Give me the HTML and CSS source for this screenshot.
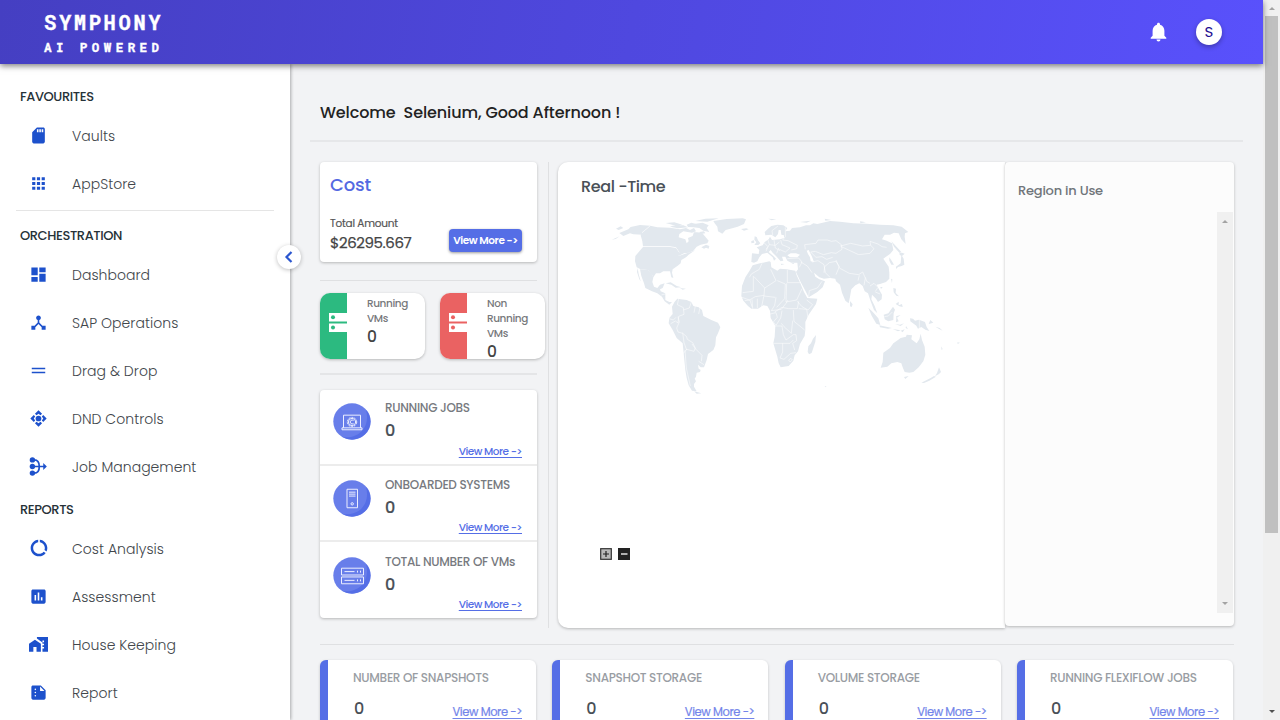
FILE: index.html
```html
<!DOCTYPE html>
<html lang="en">
<head>
<meta charset="utf-8">
<title>Symphony</title>
<link rel="stylesheet" href="styles.css">
</head>
<body>
<div class="window">
<div class="page">
  <header class="topbar">
    <div class="logo"><div class="logo-name">SYMPHONY</div><div class="logo-tag">AI POWERED</div></div>
    <div class="top-actions">
      <svg class="bell" viewBox="0 0 17 20"><path d="M8.500.7c-.9 0-1.500.6-1.500 1.500v.5C4.200 3.400 2.600 5.800 2.600 8.800v5L.7 15.800v.9h15.600v-.9l-1.900-2v-5c0-3-1.600-5.400-4.400-6.100v-.5c0-.9-.6-1.500-1.500-1.500zM6.500 17.600a2 2 0 0 0 4 0z"/></svg>
      <div class="avatar">S</div>
    </div>
  </header>
  <div class="body">
    <nav class="sidebar">
      <div class="label label-first">FAVOURITES</div>
      <a class="item"><svg viewBox="0 0 24 24"><path d="M18 2h-8L4.020 8 4 20c0 1.100.9 2 2 2h12c1.100 0 2-.9 2-2V4c0-1.100-.9-2-2-2zm-6 6h-2V4h2v4zm3 0h-2V4h2v4zm3 0h-2V4h2v4z"/></svg><span>Vaults</span></a>
      <a class="item"><svg viewBox="0 0 24 24"><path d="M4 8h4V4H4v4zm6 12h4v-4h-4v4zm-6 0h4v-4H4v4zm0-6h4v-4H4v4zm6 0h4v-4h-4v4zm6-10v4h4V4h-4zm-6 4h4V4h-4v4zm6 6h4v-4h-4v4zm0 6h4v-4h-4v4z"/></svg><span>AppStore</span></a>
      <div class="rule"></div>
      <div class="label label-second">ORCHESTRATION</div>
      <a class="item"><svg viewBox="0 0 24 24"><path d="M3 13h8V3H3v10zm0 8h8v-6H3v6zm10 0h8V11h-8v10zm0-18v6h8V3h-8z"/></svg><span>Dashboard</span></a>
      <a class="item"><svg viewBox="0 0 24 24"><path d="M17 16l-4-4V8.820C14.160 8.400 15 7.300 15 6c0-1.660-1.340-3-3-3S9 4.340 9 6c0 1.300.84 2.400 2 2.820V12l-4 4H3v5h5v-3.050l4-4.200 4 4.200V21h5v-5h-4z"/></svg><span>SAP Operations</span></a>
      <a class="item"><svg viewBox="0 0 24 24"><path d="M20.500 8.500h-17v2h17v-2zM3.500 15.500h17v-2h-17v2z"/></svg><span>Drag &amp; Drop</span></a>
      <a class="item"><svg viewBox="0 0 24 24"><circle cx="12" cy="12" r="3.600"/><path d="M7.500 6l2 1.800L12 6l2.500 1.800 2-1.800L12 1.700zM7.500 18l2-1.800L12 18l2.500-1.800 2 1.800-4.500 4.300zM6 7.500l1.800 2L6 12l1.800 2.500-1.800 2L1.700 12zM18 7.500l-1.800 2L18 12l-1.800 2.500 1.800 2 4.300-4.500z"/></svg><span>DND Controls</span></a>
      <a class="item"><svg viewBox="0 0 24 24"><path d="M4.500 3.500h2c4.500 0 6.500 4 6.500 8.500s-2 8.500-6.500 8.500h-2M4 12h15" fill="none" stroke="currentColor" stroke-width="2.200"/><circle cx="4.300" cy="3.700" r="3.400"/><circle cx="4.300" cy="12" r="3.400"/><circle cx="4.300" cy="20.300" r="3.400"/><path d="M18 7.500l4.500 4.500-4.500 4.500z"/></svg><span>Job Management</span></a>
      <div class="label label-third">REPORTS</div>
      <a class="item"><svg class="ring" viewBox="0 0 24 24"><path d="M13 2.050v3.030c3.390.49 6 3.390 6 6.920 0 .9-.18 1.750-.48 2.540l2.600 1.530c.56-1.240.88-2.620.88-4.070 0-5.180-3.950-9.450-9-9.950zM12 19c-3.870 0-7-3.130-7-7 0-3.530 2.610-6.430 6-6.920V2.050c-5.060.5-9 4.760-9 9.950 0 5.520 4.470 10 9.990 10 3.310 0 6.240-1.610 8.060-4.090l-2.600-1.530C16.170 17.980 14.210 19 12 19z"/></svg><span>Cost Analysis</span></a>
      <a class="item"><svg viewBox="0 0 24 24"><path d="M19 3H5c-1.100 0-2 .9-2 2v14c0 1.100.9 2 2 2h14c1.100 0 2-.9 2-2V5c0-1.100-.9-2-2-2zM9 17H7v-7h2v7zm4 0h-2V7h2v10zm4 0h-2v-4h2v4z"/></svg><span>Assessment</span></a>
      <a class="item"><svg viewBox="0 0 24 24"><path d="M0 11v10h5.500v-6h4v6H15V11L7.500 6zM10 2.500v1.970l7 5V11h2v2h-2v2h2v2h-2v4h7V2.500H10zm9 6.500h-2V7h2z"/></svg><span>House Keeping</span></a>
      <a class="item"><svg viewBox="0 0 24 24"><path d="M15 3H5c-1.100 0-2 .9-2 2v14c0 1.100.9 2 2 2h14c1.100 0 2-.9 2-2V9l-6-6zM8 17c-.55 0-1-.45-1-1s.45-1 1-1 1 .45 1 1-.45 1-1 1zm0-4c-.55 0-1-.45-1-1s.45-1 1-1 1 .45 1 1-.45 1-1 1zm0-4c-.55 0-1-.45-1-1s.45-1 1-1 1 .45 1 1-.45 1-1 1zm6 1V4.500l5.500 5.500H14z"/></svg><span>Report</span></a>
      <div class="collapse"><svg viewBox="0 0 10 12"><path d="M7.500 1L2.500 6l5 5" fill="none" stroke="#2b56cf" stroke-width="2.200"/></svg></div>
    </nav>
    <main class="main">
      <h1 class="welcome">Welcome&nbsp; Selenium, Good Afternoon !</h1>
      <div class="title-rule"></div>
      <div class="panels">
        <div class="left">
          <section class="cost card">
            <h2>Cost</h2>
            <div class="cost-row">
              <div><div class="amount-label">Total Amount</div><div class="amount">$26295.667</div></div>
              <button class="button">View More -&gt;</button>
            </div>
          </section>
          <div class="rule-a"></div>
          <div class="vms">
            <div class="vm card"><div class="vm-side green"><svg viewBox="0 0 18 20"><rect width="18" height="8.500"/><rect y="10.500" width="18" height="8.500"/><circle cx="4" cy="4.300" r="2"/><circle cx="4" cy="14.500" r="2"/></svg></div><div class="vm-text">Running VMs<b>0</b></div></div>
            <div class="vm card"><div class="vm-side red"><svg viewBox="0 0 18 20"><rect width="18" height="8.500"/><rect y="10.500" width="18" height="8.500"/><circle cx="4" cy="4.300" r="2"/><circle cx="4" cy="14.500" r="2"/></svg></div><div class="vm-text">Non Running VMs<b class="tight">0</b></div></div>
          </div>
          <div class="rule-b"></div>
          <section class="jobs card">
            <div class="job">
              <svg class="disc" preserveAspectRatio="none" viewBox="0 0 38 38"><circle class="d1" cx="19" cy="19" r="18.700"/><path class="d2" d="M33 7a18.500 18.500 0 0 1-24 27.600C24 38 38 26 33 7z"/><path class="ln" d="M10.500 25.500v-13h17v13M9 25.500h20v2H9z"/><circle class="ln" cx="19" cy="19.500" r="4.700" stroke-dasharray="2 1"/><circle class="ln" cx="19" cy="19.500" r="3.700"/><path class="ln" d="M20.500 18a2 2 0 1 0 0 3"/></svg>
              <div class="job-text"><h3>RUNNING JOBS</h3><b>0</b></div><a class="more">View More -&gt;</a>
            </div>
            <div class="job job-2">
              <svg class="disc" preserveAspectRatio="none" viewBox="0 0 38 38"><circle class="d1" cx="19" cy="19" r="18.700"/><path class="d2" d="M33 7a18.500 18.500 0 0 1-24 27.600C24 38 38 26 33 7z"/><path class="ln" d="M14 9.500h10.500v19H14zM16 12.500h6.500M16 14.500h6.500M16 16.500h6.500"/><circle class="ln" cx="19.200" cy="24.500" r="1.200"/></svg>
              <div class="job-text"><h3>ONBOARDED SYSTEMS</h3><b>0</b></div><a class="more">View More -&gt;</a>
            </div>
            <div class="job job-3">
              <svg class="disc" preserveAspectRatio="none" viewBox="0 0 38 38"><circle class="d1" cx="19" cy="19" r="18.700"/><path class="d2" d="M33 7a18.500 18.500 0 0 1-24 27.600C24 38 38 26 33 7z"/><path class="ln" d="M8.500 11.500h22v7h-22zM8.500 20.500h22v7h-22zM11.500 15h10M11.500 24h10M24.500 14v2M27.500 14v2M24.500 23v2M27.500 23v2"/></svg>
              <div class="job-text"><h3>TOTAL NUMBER OF VMs</h3><b>0</b></div><a class="more">View More -&gt;</a>
            </div>
          </section>
        </div>
        <div class="vline"></div>
        <section class="map">
          <h2>Real -Time</h2>
          <svg class="world" viewBox="0 0 1200 630">
            <path d="M138 86l14-7 8 5-14 6zM148 99L175 88 182 81 210 75 241 77 216 98 218 104 190 103 180 100 160 108zM125 119l24-10-12 8z"/>
            <path d="M241 77L262 82 300 83 330 88 348 84 360 90 372 84 378 94 366 98 340 94 328 102 326 112 346 118 350 130 356 124 354 114 368 108 372 96 396 98 404 108 416 122 412 130 392 134 380 140 370 152 356 158 342 160 326 168 328 156 318 142 300 139 219 139 217 124 212 106 216 98z"/>
            <path d="M219 141L300 141 318 144 328 158 326 168 350 160 368 154 376 150 356 164 348 172 334 180 332 190 322 198 308 208 306 218 310 234 304 232 300 214 280 214 270 220 258 220 250 232 246 224 234 210 212 208 200 202 195 184 196 168z"/>
            <path d="M203 204L206 222 212 244 208 238 201 216zM210 208L234 210 244 220 250 232 247 246 252 260 262 264 270 254 284 250 278 264 270 268 272 274 286 280 286 300 298 306 306 306 298 314 284 304 276 290 262 280 246 274 226 264 222 250 214 228z"/>
            <path d="M287 250l15-3 18 11 14 4-17 1-13-9zM330 264l18 2-10 3zM402 146l-8-4 14-8 10 4-2 8-8-3z"/>
            <path d="M287 69l26-2 24 7-20 3zM300 80l16-6 24 2 14 6-30 3zM350 74l14-6 14 4-6 10-18-1zM372 72l26-4 18 8-6 8 8 12-18-4-12-8-18-2zM388 96l14-2 4 6-14 2zM376 63l30-7 40-1-34 10zM430 63l40-6 48-2 10 3-6 14-19 8-22 6-14 4-10 11-13-7-2-14-8-10zM513 87l16-2 7 3-14 4z"/>
            <path d="M314 305L322 296 332 298 350 300 364 306 370 318 386 322 396 330 400 348 424 360 444 368 451 382 444 400 438 412 436 436 430 450 414 462 410 480 402 502 392 502 384 494 386 506 392 510 390 516 380 518 378 530 374 536 378 544 372 552 372 560 380 574 366 572 356 556 350 534 346 510 342 470 338 430 320 414 308 390 296 370 298 354 308 342 306 320z"/>
            <path d="M372 574l22 6-14 1z"/>
            <path class="bd" d="M216 98l25-21M326 296l-4 18 18 9 2 20-16 6-2 20-8-6-14 8M298 356l12 4 8-8M364 306l-6 18-18 6M376 318l-4 20M390 322l-4 20M324 350l4 16-8 18 4 12 14 4 12 10 2 8 16 10 8 16-4 10-22-6-10 12M338 398l4 30 8 22M366 432l12 16 18 18-2 18M345 450l4 54 12 54M386 484l16 10M274 285l14-4"/>
            <g transform="translate(480 0)">
              <path d="M64 186L66 160 86 162 88 150 80 142 98 136 104 126 116 118 120 110 126 120 150 118 162 114 162 106 154 104 152 90 146 90 144 102 136 112 130 108 124 104 106 106 104 96 114 86 124 78 142 74 160 76 172 84 166 94 180 92 186 84 210 82 228 76 240 76 250 70 262 72 300 63 330 65 370 70 410 71 450 74 490 76 515 80 535 96 525 100 524 110 527 132 514 118 506 100 492 98 480 104 464 104 456 118 470 122 486 130 490 150 480 162 468 170 460 176 468 188 476 200 478 218 478 236 468 246 450 252 440 254 446 266 456 284 455 298 444 306 438 296 426 284 424 298 434 318 442 340 432 330 422 304 414 280 404 274 398 258 388 250 376 256 364 268 360 290 356 310 346 302 336 278 330 254 318 244 316 236 300 234 282 236 268 232 252 218 256 230 268 238 285 244 278 262 262 276 236 292 226 272 212 246 198 216 204 208 202 188 184 188 172 182 166 170 156 170 160 182 152 184 138 168 128 158 122 150 116 156 130 168 138 176 132 182 128 172 112 158 96 162 88 172 82 184 72 188zM236 150L230 152 234 162 240 172 242 184 252 186 246 170 240 158zM172 166L182 160 198 160 210 164 202 172 180 172z" fill-rule="evenodd"/>
              <path d="M74 109l6 2 4 10 7 9-6 5-12 0 6-8-6-8zM64 123l8-2 1 7-9 2zM152 191l12 1-10 3zM184 190l10-2-4 4z"/>
              <path d="M68 196L90 190 118 184 122 186 124 202 142 212 150 206 170 208 196 212 200 226 212 252 222 276 232 294 262 296 258 312 236 344 226 366 226 390 224 408 210 432 204 454 194 466 190 482 176 498 152 502 146 490 142 470 130 430 134 410 136 378 122 354 120 332 112 318 100 316 84 326 64 326 54 318 40 302 34 288 36 258 46 232 60 210z"/>
              <path d="M258 405l-2 20-11 34-8 4-4-8 2-16 8-9 6-14zM360 303l8 10-3 8-5-2zM415 323l14 14 16 18 6 20-12-4-14-24zM448 376l24 5 14 3-12 2-24-4zM488 387l24 4-8 3zM512 392l12-4-6 9zM461 344l14-4 14-20 6 9-4 11-1 20-15 4-11-6zM498 349l14-4-11 8 5 11-8 3 1-16zM490 264l8 2-1 13 10 10-8-2-8-10zM497 312l9-7 0 11 10-4 2 9-10-2zM483 236l4 2-1 12zM451 261l7 0-5 6zM514 164l7 12 2 18-8 4-11 3-6 6 0-7 14-10zM508 155l16 6-8 7-7-3zM484 124l10 10 20 22-6 2-16-18zM478 172l8 12 6 10-8 0-6-12zM540 355l9 1 6 6 12-3 18 7 5 15 8 12-12-4-12-8-10 5-5-9-18-13z"/>
              <path d="M572 401L576 420 584 440 586 464 580 484 566 502 550 516 538 518 524 516 518 502 514 490 502 486 484 490 472 500 452 503 458 486 460 458 480 444 490 430 504 420 512 414 528 410 530 404 546 406 544 418 560 430 568 418zM522 531l14-3-10 9zM574 548l28-14 10-6 6 2-20 12-16 7zM621 519l6-17 6 14-6 6-12 7zM633 439l5 8-3 3zM682 427l8 1-7 4zM616 380l13 4 9 8-12-6zM601 360l9 8-14 4zM495 372l15 2 12-4-10 8zM528 378l6 10-7-4zM115 56l24 2-14 3zM210 66l32-4-12 6zM284 56l20 4-18 2zM390 64l18 3-17 3zM284 559l6 0-4 3z"/>
              <path class="bd" d="M102 128l12 12-6 14M114 120l4 14 18 2 12-10M118 134l-10 14M132 120l4 24 14 8M152 120l4 14 24 10-14 12-18-8M146 144l-6 16M128 106l-2-14 18-14M166 82l0 28-8 10 16 2 28 14-2 10-16 4M226 148l-2-14 34-4 6-10 28 0 12 4 14-2 16 12 2 14-18 12-14-2-24 6-24-10-14 2 16 16 18-2 14 8 18-6M332 138l30-8 36 8 24-2 10 10-12 14-34 4-26-12-26-12zM422 136l-2-12 24 8 12 8 14 2M318 180l10 24 30 16 28 4 12-8 8 18-4 22M282 218l2-18 14-12 20-4 10 16-10 24M246 186l18-4 18 12 4 24 14 14M212 186l20 12 14 20M388 226l-4 16M406 232l4 12 10 6M420 258l12-8 12 12-8 12M436 276l14 6M172 176l34-2 10 12-8 16M236 290l2-18 24-8 14-20"/>
              <path class="bd" d="M96 190l-8 18-24 14-6 10M70 228v46l-32 4M72 230l32 34 34-22-16-34M104 264l-2 22-26 4-18 10-22-8M142 242l24 10-2 44-24 26M172 210v38h38M170 250l-2 56 32-6 16-34M138 292l-4 24-10 16 30-4 14-18 6-10M102 286l-8 38M82 296v28M66 298l2 28M102 288l34 4M44 302l16-2 6 20M206 304l-4 22-26 0-20-4-22 14M202 304l14 16 18 10 14-16-18-14M206 326l24 2 4 26M190 330l2 34 32 26M188 362l-4 38-22-20-8-10M132 378h24l4 26 8 16 22-16 8 0 2 18-12 8 6 20M130 430h50l10-10M158 430v26l-8 18 12 4 20-18 16-2M120 342l18-4 4 14-12 14 8 10 14-22 4-22M176 480l7-5 4 5-7 6zM568 360v28M463 350l12-2 12-12"/>
            </g>
          </svg>
          <div class="zoom"><svg viewBox="0 0 12 12"><rect x=".7" y=".7" width="10.600" height="10.600" fill="#b9b9b9" stroke="#333" stroke-width="1.200"/><path d="M6 3v6M3 6h6" stroke="#222" stroke-width="1.200"/></svg><svg viewBox="0 0 12 12"><rect width="12" height="12" fill="#222"/><path d="M3 6h6.500" stroke="#fff" stroke-width="1.300"/></svg></div>
        </section>
        <aside class="region">
          <h2>Region in Use</h2>
          <div class="region-scroll"><i class="up"></i><i class="down"></i></div>
        </aside>
      </div>
      <div class="bottom-rule"></div>
      <div class="stats">
        <section class="stat"><h3>NUMBER OF SNAPSHOTS</h3><div><b>0</b><a>View More -&gt;</a></div></section>
        <section class="stat"><h3>SNAPSHOT STORAGE</h3><div><b>0</b><a>View More -&gt;</a></div></section>
        <section class="stat"><h3>VOLUME STORAGE</h3><div><b>0</b><a>View More -&gt;</a></div></section>
        <section class="stat"><h3>RUNNING FLEXIFLOW JOBS</h3><div><b>0</b><a>View More -&gt;</a></div></section>
      </div>
    </main>
  </div>
</div>
<div class="scrollbar"><i class="up"></i><div class="thumb"></div><i class="down dark"></i></div>
</div>
</body>
</html>
```
FILE: styles.css
```css
* { box-sizing: border-box; }
body { margin: 0; overflow: hidden; font-family: Poppins, Inter, "Open Sans", sans-serif; color: #212529; background: #f2f3f5; }
h1, h2, h3 { margin: 0; font-weight: 500; }
.window { display: flex; width: 1280px; height: 720px; overflow: hidden; }
.page { width: 1263px; height: 720px; display: flex; flex-direction: column; }
.topbar { position: relative; z-index: 3; flex: none; height: 64px; display: flex; justify-content: space-between; padding: 0 41px 0 44px; background: linear-gradient(100deg, #453fc2, #5951fc); box-shadow: 0 2px 6px rgba(0,0,0,.5); color: #fff; }
.logo { font-family: "Roboto Mono", "DejaVu Sans Mono", monospace; font-weight: 700; padding-top: 11px; white-space: nowrap; -webkit-text-stroke: .35px #fff; }
.logo-name { font-size: 20.500px; line-height: 24px; letter-spacing: 2.600px; }
.logo-tag { font-size: 12.500px; line-height: 16px; letter-spacing: 4.450px; margin-top: 4px; }
.top-actions { display: flex; align-items: center; gap: 29px; }
.bell { width: 17px; height: 20px; fill: #fff; }
.avatar { width: 26px; height: 26px; border-radius: 50%; background: #fff; color: #1d0d91; font-size: 15px; line-height: 26px; text-align: center; box-shadow: 0 2px 5px rgba(0,0,0,.3); }
.body { flex: 1; display: flex; min-height: 0; }
.sidebar { position: relative; z-index: 2; flex: none; width: 290px; background: #fff; box-shadow: 1px 0 3px rgba(0,0,0,.3); }
.label { font-size: 13px; line-height: 16px; font-weight: 500; color: #263238; padding-left: 20px; letter-spacing: -.4px; }
.label-first { padding-top: 25px; height: 48px; }
.label-second { padding-top: 17px; height: 40px; }
.label-third { padding-top: 11px; height: 34px; }
.item { height: 48px; display: flex; align-items: center; padding-left: 29px; font-size: 14px; font-weight: 300; color: #41464b; letter-spacing: .04px; }
.item svg { width: 19px; height: 19px; margin: 0 24px 2px 0; fill: #1d51cc; color: #1d51cc; overflow: visible; }
.item .ring { width: 20px; height: 20px; margin-right: 23px; }
.rule { height: 1px; margin: 2px 16px 0; background: #e5e5e5; }
.collapse { position: absolute; left: 277px; top: 181px; width: 24px; height: 24px; border-radius: 50%; background: #fff; box-shadow: 0 1px 4px rgba(0,0,0,.25); display: flex; align-items: center; justify-content: center; }
.collapse svg { width: 10px; height: 12px; }
.main { flex: 1; min-width: 0; padding: 37px 29px 0 30px; }
.welcome { font-size: 16px; line-height: 24px; letter-spacing: -.12px; color: #222; }
.title-rule { height: 2px; background: #e6e7e9; margin: 15px -9px 20px -10px; }
.panels { height: 466px; display: flex; }
.left { width: 217px; flex: none; }
.card { background: #fff; border-radius: 4px; box-shadow: 0 1px 3px rgba(0,0,0,.25); }
.cost { height: 100px; padding: 12px 15px 0 10px; }
.cost h2 { font-size: 18px; line-height: 22px; color: #5469e2; letter-spacing: -.2px; }
.cost-row { display: flex; justify-content: space-between; padding-top: 20px; }
.amount-label { font-size: 10.500px; line-height: 15px; color: #555; letter-spacing: -.23px; -webkit-text-stroke: .2px; }
.amount { font-size: 15px; line-height: 23px; color: #444; letter-spacing: -.4px; -webkit-text-stroke: .25px; }
.button { margin: 13px 0 0; width: 73px; height: 23px; padding: 0; border: 0; border-radius: 4px; background: #556ee6; color: #fff; font-family: inherit; font-size: 10.500px; font-weight: 600; letter-spacing: -.42px; box-shadow: 0 1px 3px rgba(0,0,0,.4); }
.rule-a { height: 1px; background: #dfe0e2; margin: 18px 0 12px; }
.vms { display: flex; gap: 15px; width: 225px; height: 66px; }
.vm { width: 105px; height: 66px; border-radius: 10px; display: flex; overflow: hidden; }
.vm-side { flex: none; width: 27px; padding: 20px 0 0 9px; }
.vm-side svg { display: block; width: 18px; height: 20px; fill: #fff; }
.green { background: #2cba80; }
.green circle { fill: #2cba80; }
.red { background: #ea6262; }
.red circle { fill: #ea6262; }
.vm-text { padding: 3px 15px 0 20px; font-size: 10.500px; line-height: 15px; color: #77797c; font-weight: 500; letter-spacing: -.42px; }
.vm-text b { display: block; font-size: 15.500px; line-height: 22px; font-weight: 500; color: #444; }
.vm-text .tight { line-height: 18px; padding-top: 2px; }
.rule-b { height: 2px; background: #e4e5e7; margin: 14px 0 15px; }
.jobs { height: 228px; }
.job { height: 76px; display: grid; grid-template-columns: 38px 1fr; grid-template-rows: 44px 1fr; column-gap: 14px; padding: 9px 15px 0 13px; border-bottom: 2px solid #ececec; }
.job:last-child { border-bottom: 0; }
.disc { width: 38px; height: 37px; margin-top: 4px; }
.job-2 .more, .job-3 .more { margin-top: -1px; }
.d1 { fill: #687eea; }
.d2 { fill: #556ee6; }
.ln { fill: none; stroke: #eef0ff; stroke-width: 1; }
.job h3 { font-size: 12px; line-height: 18px; letter-spacing: -.3px; color: #777a80; white-space: nowrap; }
.job-2 { padding-top: 10px; }
.job-3 { padding-top: 11px; }
.job b { display: block; font-size: 16px; line-height: 27px; font-weight: 500; color: #495057; -webkit-text-stroke: .2px; }
.more { grid-column: 1 / 3; justify-self: end; font-size: 10.500px; line-height: 17px; color: #556ee6; text-decoration: underline; text-underline-offset: 2px; letter-spacing: -.52px; font-weight: 500; }
.vline { width: 1px; margin: 0 9px 0 11px; background: #dfe0e2; }
.map { width: 447px; flex: none; border-radius: 10px 0 0 10px; background: #fff; box-shadow: 0 1px 3px rgba(0,0,0,.25); padding: 13px 0 0 12px; display: flex; flex-direction: column; }
.map h2 { font-size: 16px; line-height: 24px; color: #495057; padding-left: 11px; letter-spacing: -.4px; }
.world { width: 400px; height: 210px; margin-top: 1px; fill: #e2e8ee; }
.bd { fill: none; stroke: #fff; stroke-width: 2; opacity: .8; }
.zoom { display: flex; gap: 6px; padding: 138px 0 0 30px; }
.zoom svg { width: 12px; height: 12px; }
.region { flex: none; width: 228.500px; height: 464px; border-radius: 4px; background: #fcfcfc; box-shadow: 0 1px 3px rgba(0,0,0,.25); padding-top: 18px; }
.region h2 { font-size: 13px; line-height: 21px; color: #70757a; padding-left: 13px; letter-spacing: -.22px; }
.region-scroll { width: 16px; height: 401px; margin: 11px 0 0 212px; background: #f0f0f0; display: flex; flex-direction: column; justify-content: space-between; align-items: center; padding: 8px 0; }
.up { display: block; width: 0; border: 3.500px solid transparent; border-top: 0; border-bottom-color: #a3a3a3; }
.down { display: block; width: 0; border: 3.500px solid transparent; border-bottom: 0; border-top-color: #a3a3a3; }
.down.dark { border-top-color: #505050; }
.bottom-rule { height: 1px; background: #dfe0e2; margin: 16px 0 15px; }
.stats { display: grid; grid-template-columns: repeat(4, 216px); justify-content: space-between; height: 80px; margin-right: 1px; }
.stat { border-left: 8px solid #556ee6; border-radius: 6px; background: #fff; box-shadow: 0 1px 3px rgba(0,0,0,.2); padding: 9px 14px 0 25px; }
.stat h3 { font-size: 12px; line-height: 18px; color: #999da3; letter-spacing: -.3px; white-space: nowrap; }
.stat div { display: flex; justify-content: space-between; align-items: center; padding-top: 9px; }
.stat b { font-size: 16px; line-height: 26px; font-weight: 500; color: #495057; padding-left: 1px; }
.stat a { font-size: 11.500px; line-height: 18px; padding-top: 5px; color: #7385ea; text-decoration: underline; text-underline-offset: 2px; letter-spacing: -.42px; -webkit-text-stroke: .2px; }
.scrollbar { width: 17px; height: 720px; background: #f0f0f0; padding: 7px 2px; display: flex; flex-direction: column; align-items: center; }
.thumb { width: 13px; height: 517px; margin: 6px 0 auto; background: #c0c0c0; flex: none; }
```
